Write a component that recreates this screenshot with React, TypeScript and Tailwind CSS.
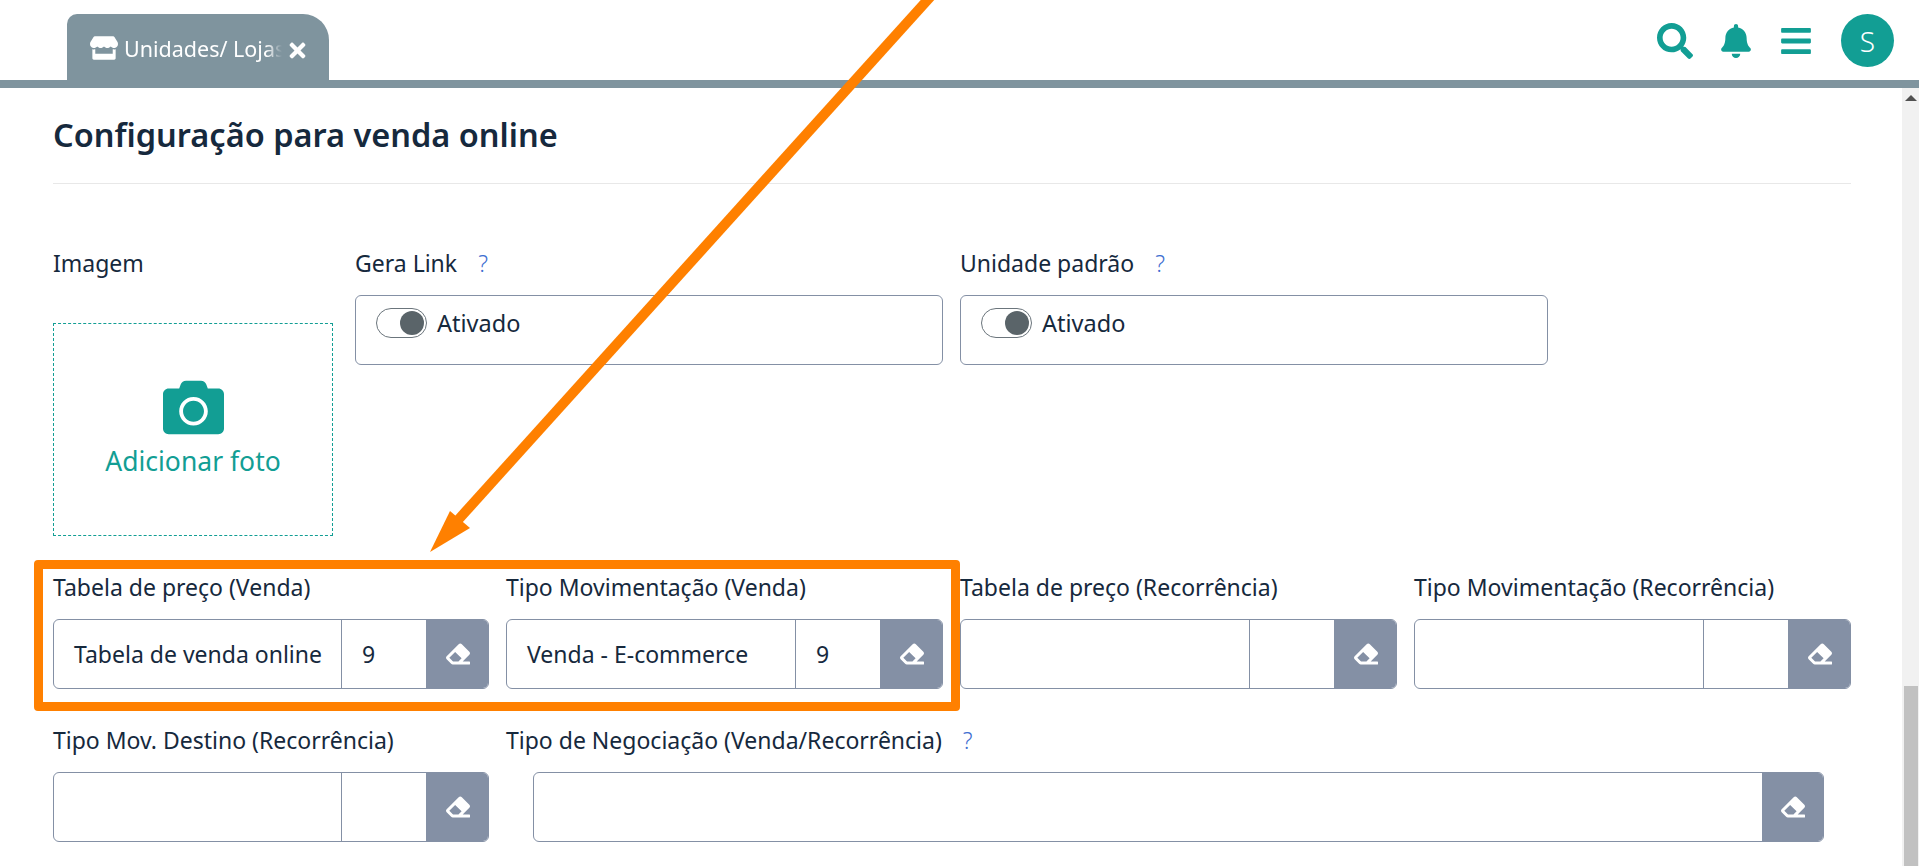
import React from "react";
import { FaBars, FaBell, FaCamera, FaEraser, FaSearch, FaStore, FaTimes } from "react-icons/fa";

function Label({ children, help }: { children: React.ReactNode; help?: boolean }) {
  return (
    <div className="flex h-[31px] items-center text-[23px] leading-[31px] text-[#16293d]">
      <span className="whitespace-nowrap">{children}</span>
      {help && <span className="ml-[21px] font-light text-[#3f6fd1]">?</span>}
    </div>
  );
}

function Lookup({ label, value, code, help }: { label: string; value?: string; code?: string; help?: boolean }) {
  return (
    <div className="flex flex-col gap-[16px]">
      <Label help={help}>{label}</Label>
      <div className="flex h-[70px] overflow-hidden rounded-[6px] border border-[#8490a5] text-[23px] text-[#16293d]">
        <div className="flex flex-1 items-center overflow-hidden whitespace-nowrap pl-[20px]">{value}</div>
        <div className="flex w-[85px] items-center border-l border-[#8490a5] pl-[20px]">{code}</div>
        <div className="-my-px -mr-px flex w-[63px] items-center justify-center bg-[#8490a5] text-white">
          <FaEraser size={24} />
        </div>
      </div>
    </div>
  );
}

function ToggleField({ label }: { label: string }) {
  return (
    <div className="flex flex-col gap-[16px]">
      <Label help>{label}</Label>
      <div className="flex h-[70px] items-start rounded-[6px] border border-[#8490a5] pl-[20px] pt-[11px]">
        <div className="flex items-center gap-[10px] text-[23.5px] leading-[30px] text-[#16293d]">
          <div className="flex h-[30px] w-[51px] items-center justify-end rounded-full border border-[#6b757c] pr-[2px]">
            <div className="h-[24px] w-[24px] rounded-full bg-[#5a6469]" />
          </div>
          <span className="pt-[1px]">Ativado</span>
        </div>
      </div>
    </div>
  );
}

export default function App() {
  return (
    <div className="relative h-[866px] w-full overflow-hidden bg-white font-['Noto_Sans',sans-serif]">
      <header className="flex h-[88px] items-start border-b-[8px] border-[#7f949e]">
        <div className="ml-[67px] mt-[14px] flex h-[66px] w-[262px] items-center rounded-tl-[10px] rounded-tr-[26px] bg-[#7f949e] pl-[23px] text-[21.5px] text-white">
          <FaStore size={28} className="mt-[1px] shrink-0" />
          <span className="ml-[6px] mt-[4px] w-[158px] overflow-hidden whitespace-nowrap [mask-image:linear-gradient(to_right,#000_90%,transparent)]">
            Unidades/ Lojas
          </span>
          <FaTimes size={23} className="ml-[4px] mt-[6px] shrink-0" />
        </div>
        <div className="ml-auto mr-[25px] mt-[14px] flex h-[53px] items-center text-[#129e94]">
          <FaSearch size={36} />
          <FaBell size={34} className="ml-[26px]" />
          <FaBars size={34} className="ml-[26px]" />
          <div className="ml-[28px] flex h-[53px] w-[53px] items-center justify-center rounded-full bg-[#129e94] text-[28px] font-light text-white">
            S
          </div>
        </div>
      </header>

      <div className="flex h-[778px]">
        <main className="min-w-0 flex-1 overflow-hidden pl-[53px] pr-[51px]">
          <h2 className="flex h-[96px] items-center border-b border-[#e8e8e8] text-[32.5px] font-semibold text-[#16293d]">
            Configuração para venda online
          </h2>

          <div className="mt-[64px] flex gap-[17px]">
            <div className="flex w-[285px] flex-col gap-[44px]">
              <Label>Imagem</Label>
              <div className="flex h-[213px] w-[280px] flex-col items-center justify-center border border-dashed border-[#129e94] pb-[3px] text-[#129e94]">
                <FaCamera size={61} />
                <span className="mt-[5px] text-[26.5px] leading-[36px]">Adicionar foto</span>
              </div>
            </div>
            <div className="w-[588px]">
              <ToggleField label="Gera Link" />
            </div>
            <div className="w-[588px]">
              <ToggleField label="Unidade padrão" />
            </div>
          </div>

          <div className="mt-[36px] grid grid-cols-[436px_437px_437px_437px] gap-x-[17px]">
            <Lookup label="Tabela de preço (Venda)" value="Tabela de venda online" code="9" />
            <Lookup label="Tipo Movimentação (Venda)" value="Venda - E-commerce" code="9" />
            <Lookup label="Tabela de preço (Recorrência)" />
            <Lookup label="Tipo Movimentação (Recorrência)" />
          </div>

          <div className="mt-[36px] grid grid-cols-[436px_437px_437px_437px] gap-x-[17px]">
            <Lookup label="Tipo Mov. Destino (Recorrência)" />
            <div className="col-span-3 flex flex-col gap-[16px]">
              <Label help>Tipo de Negociação (Venda/Recorrência)</Label>
              <div className="ml-[27px] mr-[27px] flex h-[70px] overflow-hidden rounded-[6px] border border-[#8490a5]">
                <div className="flex-1" />
                <div className="-my-px -mr-px flex w-[62px] items-center justify-center bg-[#8490a5] text-white">
                  <FaEraser size={24} />
                </div>
              </div>
            </div>
          </div>
        </main>

        <div className="flex w-[17px] shrink-0 flex-col items-center bg-[#f1f1f1]">
          <div className="mt-[7px] h-0 w-0 border-x-[6px] border-b-[6px] border-x-transparent border-b-[#505050]" />
          <div className="mt-[585px] h-[180px] w-[14px] bg-[#c1c1c1]" />
        </div>
      </div>

      {/* Annotation drawn over the page */}
      <div className="absolute left-[34px] top-[560px] h-[151px] w-[926px] rounded-[4px] border-[9px] border-[#ff8000]" />
      <svg className="absolute left-0 top-0" width="1919" height="866" viewBox="0 0 1919 866" fill="none">
        <line x1="932" y1="-5" x2="458" y2="520" stroke="#ff8000" strokeWidth="10" />
        <polygon points="430,552 450,511 470,528" fill="#ff8000" />
      </svg>
    </div>
  );
}
